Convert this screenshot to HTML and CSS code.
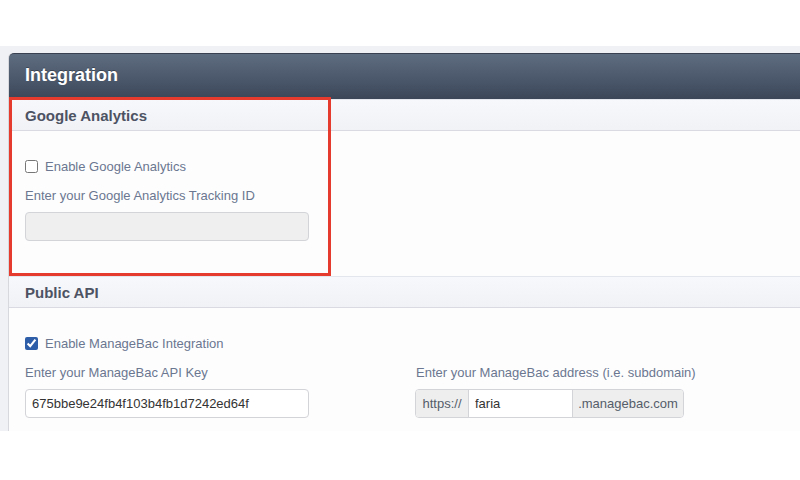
FILE: index.html
```html
<!DOCTYPE html>
<html lang="en">
<head>
    <meta charset="UTF-8">
    <title>Integration</title>
    <link rel="stylesheet" href="styles.css">
</head>
<body>
    <div class="screen">
        <div class="panel">
            <div class="panel-title">Integration</div>

            <div class="section">
                <div class="section-head">Google Analytics</div>
                <div class="section-body ga-body">
                    <label class="check"><input type="checkbox"> Enable Google Analytics</label>
                    <div class="field">
                        <div class="field-label">Enter your Google Analytics Tracking ID</div>
                        <input type="text" class="text-input" disabled>
                    </div>
                </div>
            </div>

            <div class="section">
                <div class="section-head">Public API</div>
                <div class="section-body api-body">
                    <label class="check"><input type="checkbox" checked> Enable ManageBac Integration</label>
                    <div class="columns">
                        <div class="field">
                            <div class="field-label">Enter your ManageBac API Key</div>
                            <input type="text" class="text-input" value="675bbe9e24fb4f103b4fb1d7242ed64f">
                        </div>
                        <div class="field">
                            <div class="field-label">Enter your ManageBac address (i.e. subdomain)</div>
                            <div class="input-group">
                                <span class="addon">https://</span>
                                <input type="text" class="group-input" value="faria">
                                <span class="addon addon-end">.managebac.com</span>
                            </div>
                        </div>
                    </div>
                </div>
            </div>

            <div class="highlight"></div>
        </div>
    </div>
</body>
</html>
```

FILE: styles.css
```css
body {
    margin: 0;
    padding: 0;
    background: #ffffff;
    font-family: "Liberation Sans", Arial, sans-serif;
    width: 800px;
    height: 480px;
    overflow: hidden;
}
.screen {
    margin-top: 46px;
    height: 385px;
    background: #f0f1f5;
    padding: 7px 0 0 8px;
    box-sizing: border-box;
    overflow: hidden;
}
.panel {
    position: relative;
    height: 100%;
    background: #fdfdfe;
    border-left: 1px solid #d6d8de;
    border-radius: 5px 0 0 0;
}
.panel-title {
    height: 45px;
    line-height: 43px;
    padding-left: 16px;
    color: #ffffff;
    font-size: 18px;
    font-weight: bold;
    background: linear-gradient(#5f6d80, #3b4659);
    border-top: 1px solid #3a4252;
    border-radius: 5px 0 0 0;
    text-shadow: 0 -1px 0 rgba(0, 0, 0, 0.3);
}
.section-head {
    height: 30px;
    line-height: 31px;
    padding-left: 16px;
    font-size: 15px;
    font-weight: bold;
    color: #4d5363;
    background: linear-gradient(#f7f8fb, #f1f2f6);
    border-top: 1px solid #e4e6ee;
    border-bottom: 1px solid #d9dae2;
}
.section-body {
    padding: 0 16px;
}
.ga-body {
    padding-top: 27px;
    height: 118px;
}
.api-body {
    padding-top: 27px;
}
.check {
    display: flex;
    align-items: center;
    gap: 7px;
    font-size: 13px;
    color: #6b7790;
    height: 16px;
}
.check input {
    margin: 0;
    width: 13px;
    height: 13px;
    accent-color: #2f5ea8;
}
.field {
    margin-top: 14px;
}
.field-label {
    font-size: 13px;
    color: #6b7790;
    height: 16px;
    line-height: 16px;
}
.text-input {
    display: block;
    margin-top: 8px;
    width: 284px;
    height: 29px;
    box-sizing: border-box;
    border: 1px solid #d3d4d8;
    border-radius: 4px;
    padding: 0 6px;
    font-family: "Liberation Sans", Arial, sans-serif;
    font-size: 13px;
    color: #333333;
    background: #ffffff;
}
.text-input:disabled {
    background: #efefef;
}
.columns {
    display: flex;
    gap: 107px;
}
.input-group {
    display: flex;
    margin-top: 8px;
    height: 29px;
    width: 269px;
    border: 1px solid #d3d4d8;
    border-radius: 4px;
    box-sizing: border-box;
    margin-left: -1px;
    overflow: hidden;
    font-size: 13px;
}
.addon {
    flex: none;
    box-sizing: border-box;
    width: 53px;
    background: #eeeeee;
    color: #555d6a;
    line-height: 27px;
    text-align: center;
    border-right: 1px solid #d3d4d8;
    white-space: nowrap;
}
.addon-end {
    flex: 1;
    width: auto;
    border-right: none;
    border-left: 1px solid #d3d4d8;
}
.group-input {
    flex: none;
    box-sizing: border-box;
    border: none;
    width: 103px;
    padding: 0 6px;
    font-family: "Liberation Sans", Arial, sans-serif;
    font-size: 13px;
    color: #333333;
    background: #ffffff;
}
.highlight {
    position: absolute;
    left: 0;
    top: 44px;
    width: 322px;
    height: 179px;
    border: 3px solid #e53b2f;
    box-sizing: border-box;
}
```
